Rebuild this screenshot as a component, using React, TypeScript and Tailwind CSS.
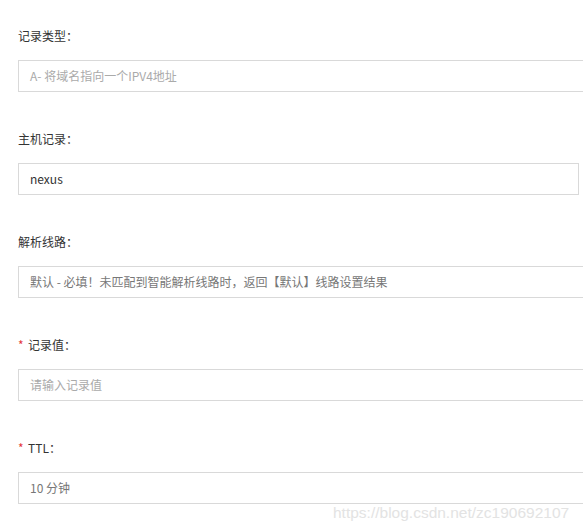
import React from "react";

interface FieldProperties {
  label: string
  required?: boolean
  value: string
  tone: "placeholder" | "muted" | "value"
  boxClass?: string
}

const tones = {
  placeholder: "text-[#aaaaaa]",
  muted: "text-[#777777]",
  value: "text-[#333333]",
};

function Field(properties: FieldProperties) {
  return (
    <div className="flex flex-col">
      <div className="flex items-center h-[18px] text-[12px] text-[#333333]">
        {properties.required && <span className="text-[#e4393c] w-[10px] text-[12px] leading-none">*</span>}
        <span>{properties.label}：</span>
      </div>
      <div
        className={`mt-[15px] h-[32px] border border-[#d9d9d9] flex items-center pl-[11px] text-[12px] ${tones[properties.tone]} ${properties.boxClass ?? "w-[580px]"}`}
      >
        {properties.value}
      </div>
    </div>
  );
}

export default function App() {
  return (
    <div
      className="relative w-[583px] h-[528px] overflow-hidden bg-white"
      style={{ fontFamily: '"Noto Sans CJK SC", "Noto Sans", sans-serif' }}
    >
      <div className="pl-[18px] pt-[27px] flex flex-col gap-[38px]">
        <Field label="记录类型" value="A- 将域名指向一个IPV4地址" tone="placeholder" />
        <Field label="主机记录" value="nexus" tone="value" boxClass="w-[561px]" />
        <Field label="解析线路" value="默认 - 必填！未匹配到智能解析线路时，返回【默认】线路设置结果" tone="muted" />
        <Field label="记录值" required value="请输入记录值" tone="placeholder" />
        <Field label="TTL" required value="10 分钟" tone="muted" />
      </div>
      <div
        className="absolute left-[333px] top-[501px] text-[15.5px] text-[#e3e3e3]"
        style={{ fontFamily: '"Liberation Sans", Arial, sans-serif' }}
      >
        https://blog.csdn.net/zc190692107
      </div>
    </div>
  );
}
